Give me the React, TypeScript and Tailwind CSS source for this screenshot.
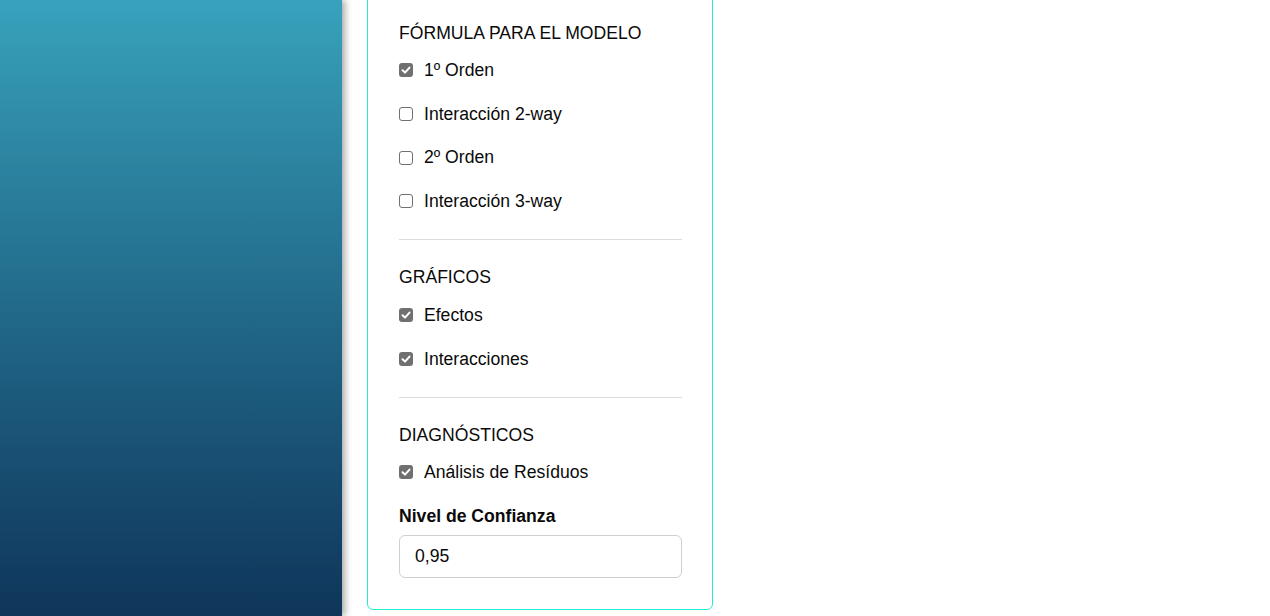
import React, { useState } from "react";

type Opt = { id: string; label: string; checked: boolean };

const Check = ({ opt, onToggle }: { opt: Opt; onToggle: () => void }) => (
    <label className="flex items-center h-6 cursor-pointer select-none" onClick={onToggle}>
        {opt.checked ? (
            <span className="w-[14px] h-[14px] shrink-0 rounded-[3px] bg-[#707070] flex items-center justify-center">
                <svg width="10" height="10" viewBox="0 0 10 10">
                    <path d="M1.5 5.3 L4 7.6 L8.5 2.6" stroke="white" strokeWidth="2" fill="none" strokeLinecap="round" strokeLinejoin="round" />
                </svg>
            </span>
        ) : (
            <span className="w-[14px] h-[14px] shrink-0 rounded-[3px] border border-[#707070] bg-white" />
        )}
        <span className="ml-[11px] text-[17.6px] text-[#0a0a0a]">{opt.label}</span>
    </label>
);

const Section = ({ title, opts, setOpts, headGap }: { title: string; opts: Opt[]; setOpts: (o: Opt[]) => void; headGap: string }) => (
    <div>
        <h3 className={`h-6 leading-6 text-[17.6px] text-[#0a0a0a] ${headGap}`}>{title}</h3>
        <div className="flex flex-col gap-[19.8px]">
            {opts.map((o, i) => (
                <Check
                    key={o.id}
                    opt={o}
                    onToggle={() => setOpts(opts.map((x, j) => (j === i ? { ...x, checked: !x.checked } : x)))}
                />
            ))}
        </div>
    </div>
);

const App = () => {
    const [formula, setFormula] = useState<Opt[]>([
        { id: "o1", label: "1º Orden", checked: true },
        { id: "i2", label: "Interacción 2-way", checked: false },
        { id: "o2", label: "2º Orden", checked: false },
        { id: "i3", label: "Interacción 3-way", checked: false },
    ]);
    const [graficos, setGraficos] = useState<Opt[]>([
        { id: "ef", label: "Efectos", checked: true },
        { id: "in", label: "Interacciones", checked: true },
    ]);
    const [diag, setDiag] = useState<Opt[]>([{ id: "res", label: "Análisis de Resíduos", checked: true }]);
    const [conf, setConf] = useState("0,95");

    return (
        <div className="flex h-[616px] overflow-hidden bg-white font-['Liberation_Sans',Arial,sans-serif]">
            <aside className="w-[342px] shrink-0 h-full bg-gradient-to-b from-[#38a2bc] to-[#0f355a] shadow-[3px_0_7px_rgba(0,0,0,0.35)] z-10" />
            <main className="pl-[25px]">
                <div className="mt-[-10px] w-[346px] border border-[#26ecd2] rounded-[6px] bg-white pl-[31px] pr-[30px] pt-[30px] pb-[31px]">
                    <Section title="FÓRMULA PARA EL MODELO" opts={formula} setOpts={setFormula} headGap="mb-[13px]" />
                    <hr className="mt-[25.6px] mb-[25px] border-0 h-px bg-[#dcdcdc]" />
                    <Section title="GRÁFICOS" opts={graficos} setOpts={setGraficos} headGap="mb-[14px]" />
                    <hr className="mt-[26px] mb-[25px] border-0 h-px bg-[#dcdcdc]" />
                    <Section title="DIAGNÓSTICOS" opts={diag} setOpts={setDiag} headGap="mb-[13px]" />
                    <div className="mt-5 h-6 leading-6 text-[17.6px] font-bold text-[#0a0a0a]">Nivel de Confianza</div>
                    <input
                        value={conf}
                        onChange={(e) => setConf(e.target.value)}
                        className="mt-[7px] w-full h-[43px] px-[15px] text-[17.6px] text-[#0a0a0a] border border-[#cfcfcf] rounded-[6px] outline-none"
                    />
                </div>
            </main>
        </div>
    );
};

export default App;
